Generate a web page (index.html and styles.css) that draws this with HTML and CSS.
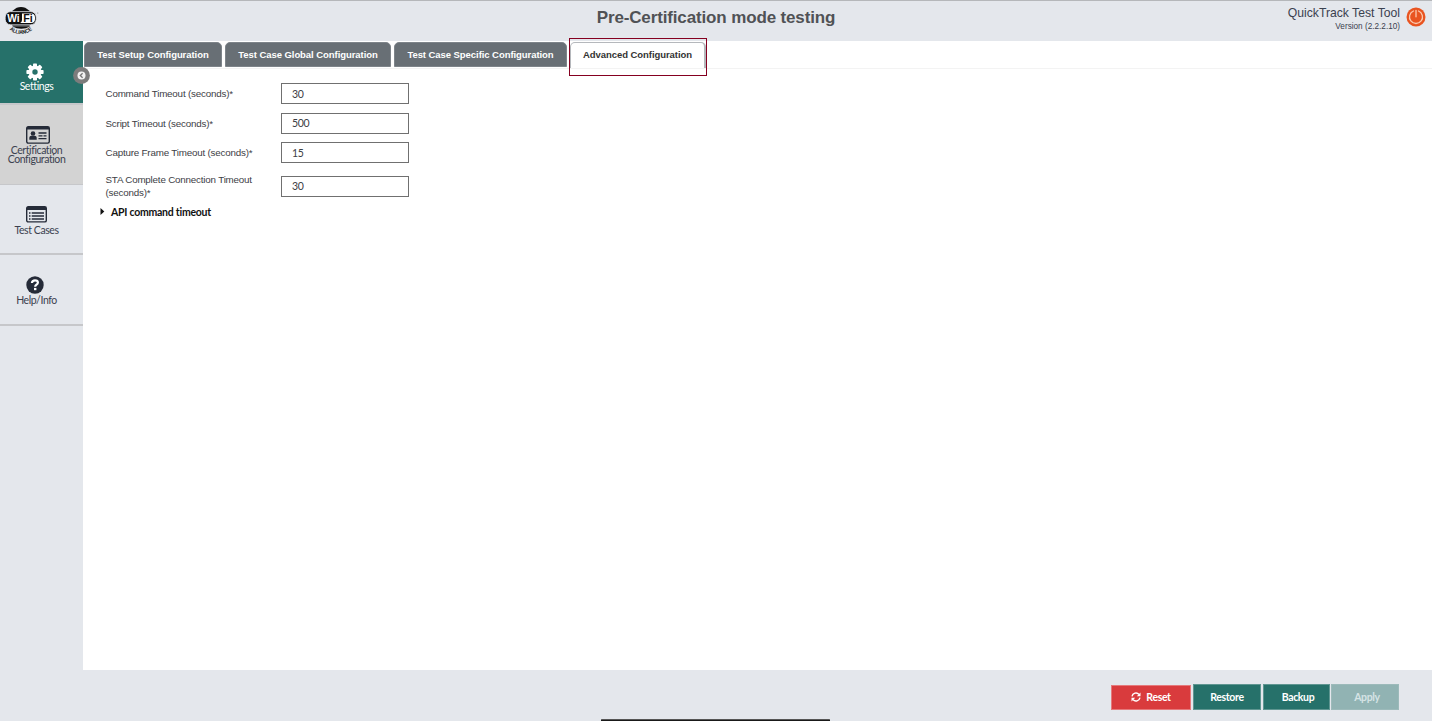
FILE: index.html
```html
<!DOCTYPE html>
<html lang="en">
<head>
<meta charset="utf-8">
<title>QuickTrack Test Tool</title>
<link rel="stylesheet" href="styles.css">
</head>
<body>
<div class="app">
  <header class="header">
    <svg class="logo" width="36" height="30" viewBox="0 0 36 30">
      <ellipse cx="16" cy="12.500" rx="11" ry="11.500" fill="#111"/>
      <path d="M2 19.700H30.500L27 27Q16 32 5.500 27z" fill="#e4e7ec"/>
      <path d="M7 20.200h18.500Q16.300 25.500 7 20.200z" fill="#111"/>
      <rect x=".2" y="5.600" width="31" height="13.200" rx="5.500" fill="#111" stroke="#e4e7ec" stroke-width=".8"/>
      <path d="M17 7.500h9a4 4 0 0 1 4 4v1.500a4 4 0 0 1-4 4H15.200q1.800-1 1.800-3z" fill="#fff"/>
      <text class="logo-word" x="2.200" y="16" fill="#fff" textLength="12.500" lengthAdjust="spacingAndGlyphs">Wi</text>
      <text class="logo-word" x="18.200" y="16" fill="#111" textLength="9.500" lengthAdjust="spacingAndGlyphs">Fi</text>
      <path id="arc" d="M3.500 23Q16 33 28.500 23" fill="none"/>
      <text class="logo-sub"><textPath href="#arc" startOffset="1" textLength="25" lengthAdjust="spacingAndGlyphs">ALLIANCE</textPath></text>
      <circle cx="32.800" cy="7" r=".5" fill="#666"/>
    </svg>
    <h1 class="title">Pre-Certification mode testing</h1>
    <div class="product">
      <div class="product-text">
        <div class="product-name">QuickTrack Test Tool</div>
        <div class="version">Version (2.2.2.10)</div>
      </div>
      <svg class="power" width="20" height="20" viewBox="0 0 20 20" fill="none" stroke="#fbc9ae" stroke-width="1.300" stroke-linecap="round">
        <circle cx="10" cy="10" r="9.500" fill="#e95420" stroke="none"/>
        <path d="M7.500 4a6.500 6.500 0 1 0 5 0M10 3.300v6.500"/>
      </svg>
    </div>
  </header>

  <nav class="sidebar">
    <a class="nav-item settings">
      <svg width="18" height="18" viewBox="-9 -9 18 18" fill="#fff">
        <g id="teeth"><rect x="-2" y="-8.600" width="4" height="17.200" rx=".8"/><rect x="-8.600" y="-2" width="17.200" height="4" rx=".8"/></g>
        <use href="#teeth" transform="rotate(45)"/>
        <circle r="6.500"/><circle r="2.700" fill="#26716a"/>
      </svg>
      <span>Settings</span>
      <svg class="collapse" width="17" height="17" viewBox="0 0 17 17">
        <circle cx="8.500" cy="8.500" r="8.400" fill="#7c7c7c"/><circle cx="8.500" cy="8.500" r="4" fill="#f2f2f2"/>
        <path d="M9.600 6.300L7.300 8.500l2.300 2.200" fill="none" stroke="#777" stroke-width="1.300"/>
      </svg>
    </a>
    <a class="nav-item cert">
      <svg width="24" height="18" viewBox="0 0 24 18">
        <rect x=".7" y=".7" width="22.600" height="16.400" rx="1.500" fill="none" stroke="#252b38" stroke-width="1.400"/>
        <path d="M1 1h22v2.500H1z" fill="#252b38"/>
        <circle cx="7" cy="7.500" r="2.300" fill="#252b38"/><path d="M3.300 13.700v-2q0-2 2.200-2h3q2.200 0 2.200 2v2z" fill="#252b38"/>
        <path d="M12.500 7h8M12.500 12.700h8M12.500 9.800h4M17.500 9.800h3" stroke="#252b38" stroke-width="1.300"/>
      </svg>
      <span>Certification<br>Configuration</span>
    </a>
    <a class="nav-item cases">
      <svg width="21" height="17" viewBox="0 0 21 17">
        <rect x=".7" y=".7" width="19.600" height="15.200" rx="1.500" fill="none" stroke="#252b38" stroke-width="1.400"/>
        <path d="M1 1h19v3H1z" fill="#252b38"/>
        <path d="M3 7h1.500M3 10h1.500M3 13h1.500M5.700 7H18M5.700 10H18M5.700 13H18" stroke="#252b38" stroke-width="1.400"/>
      </svg>
      <span>Test Cases</span>
    </a>
    <a class="nav-item help">
      <svg width="18" height="18" viewBox="0 0 18 18">
        <circle cx="9" cy="9" r="8.700" fill="#252b38"/>
        <path d="M5.900 7Q6.200 4.300 9 4.300q2.900 0 2.900 2.300 0 1.300-1.500 2.200Q9.200 9.500 9.200 10.800" fill="none" stroke="#fff" stroke-width="2.200"/>
        <rect x="8" y="11.900" width="2.400" height="2.300" fill="#fff"/>
      </svg>
      <span>Help/Info</span>
    </a>
  </nav>

  <main class="content">
    <div class="tabs">
      <div class="tab t1">Test Setup Configuration</div>
      <div class="tab t2">Test Case Global Configuration</div>
      <div class="tab t3">Test Case Specific Configuration</div>
      <div class="focus-frame"><div class="tab active">Advanced Configuration</div></div>
    </div>
    <form class="form">
      <label class="row"><span>Command Timeout (seconds)*</span><input value="30"></label>
      <label class="row"><span>Script Timeout (seconds)*</span><input value="500"></label>
      <label class="row"><span>Capture Frame Timeout (seconds)*</span><input value="15"></label>
      <label class="row tall"><span>STA Complete Connection Timeout (seconds)*</span><input value="30"></label>
    </form>
    <div class="disclosure">
      <svg width="5" height="7" viewBox="0 0 5 7"><path d="M.5 0L4.300 3.500.5 7z" fill="#111"/></svg>
      <span>API command timeout</span>
    </div>
  </main>

  <footer class="footer">
    <div class="btn reset">
      <svg width="10" height="10" viewBox="0 0 10 10" fill="none" stroke="#fff" stroke-width="1.400"><path d="M1 4.300A4 4 0 0 1 8 2.500M9 5.700A4 4 0 0 1 2 7.500"/><path d="M9.500.6v3.700H5.800zM.5 9.400V5.700h3.700z" fill="#fff" stroke="none"/></svg>
      Reset
    </div>
    <div class="btn restore">Restore</div>
    <div class="btn backup">Backup</div>
    <div class="btn apply">Apply</div>
    <div class="home-bar"></div>
  </footer>
</div>
</body>
</html>
```
FILE: styles.css
```css
* { box-sizing: border-box; }
body { margin: 0; font-family: "Liberation Sans", Arial, sans-serif; color: #3d4045; }
.app {
  width: 1432px; height: 721px; background: #fff;
  display: grid; grid-template: 41px 629px 51px / 83px 1fr;
}
.header {
  grid-column: 1 / 3; background: #e4e7ec; border-top: 1px solid #b5b7ba;
  display: grid; grid-template-columns: 1fr auto 1fr; align-items: start;
}
.logo { margin: 5px 0 0 5px; }
.logo-word { font: bold 11px "Liberation Sans", sans-serif; }
.logo-sub { font: bold 5.500px "Liberation Sans", sans-serif; fill: #111; }
.title { margin: 7px 0 0; font-size: 17px; line-height: 20px; letter-spacing: -.14px; font-weight: bold; color: #505255; white-space: nowrap; }
.product { display: flex; justify-content: flex-end; padding-right: 6px; }
.product-text { text-align: right; margin-right: 6px; }
.product-name { font-size: 12.200px; line-height: 14px; margin-top: 5px; color: #3b414f; }
.version { font-size: 8.200px; line-height: 10px; margin-top: 2px; color: #3b414f; }
.power { margin-top: 6px; }

.sidebar { grid-row: 2 / 4; background: #e4e7ec; font-family: Lato, sans-serif; font-size: 10.500px; letter-spacing: -.42px; line-height: 9.500px; color: #3b414f; font-variant-ligatures: none; }
.nav-item { position: relative; display: flex; flex-direction: column; align-items: center; text-align: center; padding-right: 10px; border-bottom: 2px solid #c6c7ca; }
.nav-item svg { flex: none; }
.settings { height: 64px; padding-top: 22px; background: #26716a; color: #fff; }
.settings > svg:first-child { margin-right: 3px; }
.settings span { margin-top: 1px; }
.collapse { position: absolute; left: 73px; top: 26px; z-index: 1; }
.cert { height: 80px; padding-top: 21px; background: #d3d3d3; border-bottom-width: 1px; }
.cert svg { margin-left: 3px; }
.cert span { margin-top: 1.500px; }
.cases { height: 70px; padding-top: 21px; }
.cases span { margin-top: 2.500px; }
.help { height: 71px; padding-top: 21px; }
.help svg { margin-right: 3px; }
.help span { margin-top: 1.500px; }

.content { min-width: 0; }
.tabs { height: 28px; border-bottom: 1px solid #f3f3f3; padding: 1px 0 0 1px; display: flex; gap: 3px; }
.tab { height: 25px; border: 1px solid #7e848a; border-radius: 5px 5px 0 0; background: #686f75; color: #fff; font-size: 9.500px; line-height: 23px; letter-spacing: -.06px; font-weight: bold; text-align: center; white-space: nowrap; }
.t1 { width: 138px; }
.t2 { width: 166px; }
.t3 { width: 173px; }
.focus-frame { width: 138px; height: 38px; margin: -4px 0 0 -1px; padding-top: 3px; border: 1px solid #850020; z-index: 1; }
.active { height: 26px; background: #fff; color: #333; border: 1px solid #b5b8bc; border-right-width: 2px; border-bottom: 0; line-height: 24px; }

.form { padding: 14px 0 0 22px; display: flex; flex-direction: column; }
.row { display: grid; grid-template-columns: 176px 128px; align-items: center; height: 29.500px; padding-bottom: 8px; font-size: 9.800px; letter-spacing: -.19px; line-height: 13px; color: #3d4045; }
.row span { padding: 0 10px 0 .5px; }
.row input { width: 128px; height: 21px; margin: 0; padding: 0 10px; border: 1px solid #707070; border-radius: 0; background: #fff; color: #3d4045; font: 10.500px Lato, sans-serif; letter-spacing: -.4px; }
.row.tall { height: 29px; padding: 0; }
.disclosure { display: flex; align-items: center; gap: 6px; padding: 4px 0 0 17px; font: bold 10.500px/14px Lato, sans-serif; letter-spacing: -.25px; font-variant-ligatures: none; color: #111; }

.footer { grid-column: 2; position: relative; background: #e4e7ec; display: flex; gap: 2px; justify-content: flex-end; align-items: flex-start; padding: 14px 33px 0 0; }
.btn { height: 26px; display: flex; align-items: center; justify-content: center; gap: 5px; color: #fff; font: bold 10.500px Lato, sans-serif; letter-spacing: -.35px; padding-bottom: 1px; background: #26716a; border: 1px solid #5f9691; }
.reset { width: 80px; height: 25px; margin-top: .5px; background: #d93b3d; border-color: #e5797b; }
.restore { width: 68px; }
.backup { width: 67px; padding-left: 3px; }
.apply { width: 68px; margin-left: -1px; padding-left: 4px; background: #91b3b3; border-color: #9cbaba; color: #d5e3e5; }
.home-bar { position: absolute; left: 518px; bottom: 0; width: 229px; height: 2px; background: #191919; border-top: 1px solid #555; border-radius: 1px 1px 0 0; }
```
